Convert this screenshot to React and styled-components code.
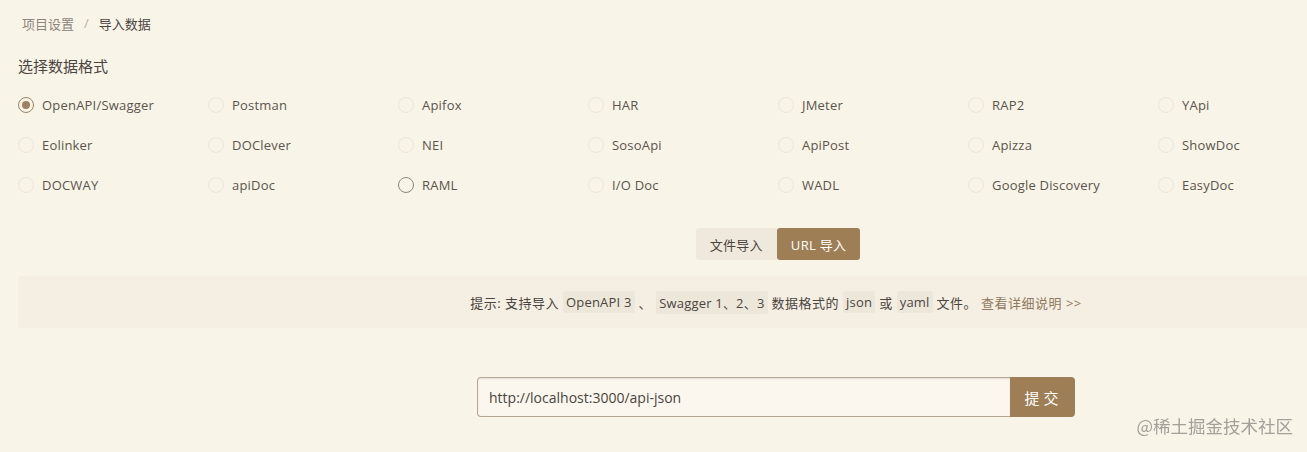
import React, { useState } from 'react';
import styled, { createGlobalStyle } from 'styled-components';

const GlobalStyle = createGlobalStyle`
  html, body {
    margin: 0;
    padding: 0;
    background: #f9f4e8;
    overflow: hidden;
  }
  body {
    font-family: "Open Sans", "Noto Sans CJK SC", sans-serif;
    color: #4a4540;
  }
`

const Page = styled.div`
  width: 1516px;
  padding: 12px 0 0 18px;
  position: relative;
  height: 440px;
`

const Breadcrumb = styled.div`
  display: flex;
  align-items: center;
  gap: 8px;
  padding-left: 4px;
  height: 22px;
  font-size: 13px;
  color: #8c857c;
`

const Crumb = styled.span`
  color: ${p => (p.current ? '#4a4540' : '#8c857c')};
`

const Slash = styled.span`
  color: #b8b0a5;
  padding: 0 2px;
`

const Title = styled.h3`
  margin: 21px 0 0;
  font-size: 15px;
  font-weight: 400;
  color: #4a4540;
  height: 22px;
  line-height: 22px;
`

const RadioGrid = styled.div`
  display: grid;
  grid-template-columns: repeat(7, 190px);
  grid-auto-rows: 40px;
  margin-top: 8px;
`

const RadioItem = styled.label`
  display: flex;
  align-items: center;
  gap: 8px;
  font-size: 13px;
  letter-spacing: 0.2px;
  color: #5a544d;
  cursor: pointer;
`

const Circle = styled.span`
  box-sizing: border-box;
  width: 16px;
  height: 16px;
  border-radius: 50%;
  border: 1px solid ${p => (p.checked ? '#9b8466' : p.strong ? '#8f877c' : '#ede6da')};
  background: #f9f4e8;
  display: flex;
  align-items: center;
  justify-content: center;
  &::after {
    content: '';
    width: 8px;
    height: 8px;
    border-radius: 50%;
    background: #9e8062;
    display: ${p => (p.checked ? 'block' : 'none')};
  }
`

const Tabs = styled.div`
  display: flex;
  width: 1516px;
  justify-content: center;
  margin-top: 23px;
  padding-left: 2px;
`

const Tab = styled.button`
  height: 32px;
  padding: 0 14px;
  border: none;
  font-family: inherit;
  font-size: 13px;
  letter-spacing: 0.3px;
  background: ${p => (p.active ? '#9e7e55' : '#efe9dd')};
  color: ${p => (p.active ? '#fff' : '#4a4540')};
  cursor: pointer;
  &:first-child { border-radius: 3px 0 0 3px; }
  &:last-child { border-radius: 3px; }
`

const Hint = styled.div`
  margin-top: 16px;
  height: 52px;
  background: #f5eee2;
  border-radius: 4px;
  display: flex;
  align-items: center;
  justify-content: center;
  font-size: 13px;
  letter-spacing: 0.5px;
  color: #4a4540;
`

const Code = styled.span`
  background: #ede7da;
  padding: 2px 3px;
  margin: 0 4px;
  border-radius: 2px;
  letter-spacing: 0.2px;
`

const MoreLink = styled.a`
  color: #8f7a5e;
  text-decoration: none;
  margin-left: 4px;
`

const Form = styled.div`
  display: flex;
  justify-content: center;
  margin-top: 49px;
`

const UrlInput = styled.input`
  box-sizing: border-box;
  width: 533px;
  height: 40px;
  border: 1px solid #b3a895;
  border-right: none;
  border-radius: 4px 0 0 4px;
  background: #fbf7ee;
  padding: 0 11px;
  font-family: inherit;
  font-size: 14px;
  color: #4a4540;
  box-shadow: inset 0 1px 2px rgba(0,0,0,0.1);
  outline: none;
`

const Submit = styled.button`
  height: 40px;
  width: 65px;
  border: none;
  border-radius: 0 4px 4px 0;
  background: #9e7e55;
  color: #fff;
  font-family: inherit;
  font-size: 15px;
  letter-spacing: 4px;
  padding-left: 8px;
  cursor: pointer;
`

const Watermark = styled.div`
  position: fixed;
  right: 14px;
  bottom: 14px;
  font-size: 17.5px;
  color: #a49f99;
  font-family: "Noto Sans CJK SC", sans-serif;
`

const formats = [
  'OpenAPI/Swagger', 'Postman', 'Apifox', 'HAR', 'JMeter', 'RAP2', 'YApi',
  'Eolinker', 'DOClever', 'NEI', 'SosoApi', 'ApiPost', 'Apizza', 'ShowDoc',
  'DOCWAY', 'apiDoc', 'RAML', 'I/O Doc', 'WADL', 'Google Discovery', 'EasyDoc',
]

export default function App() {
  const [format, setFormat] = useState('OpenAPI/Swagger')
  const [mode, setMode] = useState('url')
  return (
    <Page>
      <GlobalStyle />
      <Breadcrumb>
        <Crumb>项目设置</Crumb>
        <Slash>/</Slash>
        <Crumb current>导入数据</Crumb>
      </Breadcrumb>
      <Title>选择数据格式</Title>
      <RadioGrid>
        {formats.map(f => (
          <RadioItem key={f} onClick={() => setFormat(f)}>
            <Circle checked={format === f} strong={f === 'RAML'} />
            {f}
          </RadioItem>
        ))}
      </RadioGrid>
      <Tabs>
        <Tab active={mode === 'file'} onClick={() => setMode('file')}>文件导入</Tab>
        <Tab active={mode === 'url'} onClick={() => setMode('url')}>URL 导入</Tab>
      </Tabs>
      <Hint>
        提示: 支持导入 <Code>OpenAPI 3</Code> 、 <Code>Swagger 1、2、3</Code>数据格式的<Code>json</Code>或<Code>yaml</Code>文件。
        <MoreLink href="#">查看详细说明 &gt;&gt;</MoreLink>
      </Hint>
      <Form>
        <UrlInput defaultValue="http://localhost:3000/api-json" />
        <Submit>提交</Submit>
      </Form>
      <Watermark>@稀土掘金技术社区</Watermark>
    </Page>
  )
}
